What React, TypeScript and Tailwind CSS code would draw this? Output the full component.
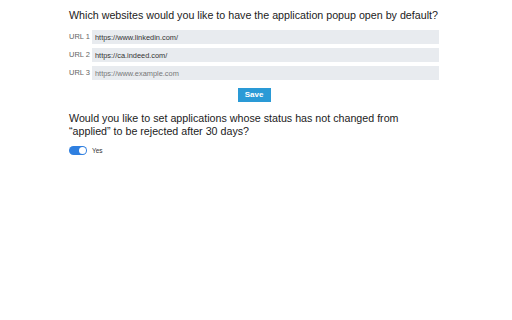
import { useState } from "react";

const urls = [
  { label: "URL 1", value: "https://www.linkedin.com/", placeholder: "" },
  { label: "URL 2", value: "https://ca.indeed.com/", placeholder: "" },
  { label: "URL 3", value: "", placeholder: "https://www.example.com" },
];

export default function App() {
  const [enabled, setEnabled] = useState(true);

  return (
    <div className="w-[512px] h-[320px] bg-white text-[#222] font-['Liberation_Sans',Arial,sans-serif]">
      <div className="ml-[69px] w-[370px] pt-[8px]">
        <h1 className="text-[10.7px] leading-[14px] text-[#222] whitespace-nowrap">
          Which websites would you like to have the application popup open by default?
        </h1>

        {/* url list */}
        <div className="mt-[8px] flex flex-col gap-[4px]">
          {urls.map((u) => (
            <div key={u.label} className="flex items-center gap-[4px]">
              <span className="w-[19px] text-[7.5px] text-[#666] whitespace-nowrap">{u.label}</span>
              <input
                defaultValue={u.value}
                placeholder={u.placeholder}
                className="flex-1 h-[14px] bg-[#e8ebef] px-[3px] text-[7.4px] text-[#333] placeholder:text-[#777] outline-none"
              />
            </div>
          ))}
        </div>

        <div className="mt-[8px] flex justify-center">
          <button className="w-[33px] h-[14px] bg-[#2a9ad6] text-white text-[8px] font-bold leading-[14px]">
            Save
          </button>
        </div>

        <p className="mt-[10px] text-[10.7px] leading-[13px] text-[#222] w-[340px]">
          Would you like to set applications whose status has not changed from “applied” to be rejected after 30 days?
        </p>

        <div className="mt-[8px] flex items-center gap-[5px]">
          <button
            onClick={() => setEnabled(!enabled)}
            className={`w-[18px] h-[9px] rounded-full p-[1px] flex items-center ${
              enabled ? "bg-[#2f7fe0] justify-end" : "bg-gray-300 justify-start"
            }`}
          >
            <span className="block w-[7px] h-[7px] rounded-full bg-white" />
          </button>
          <span className="text-[6.5px] text-[#333]">Yes</span>
        </div>
      </div>
    </div>
  );
}
